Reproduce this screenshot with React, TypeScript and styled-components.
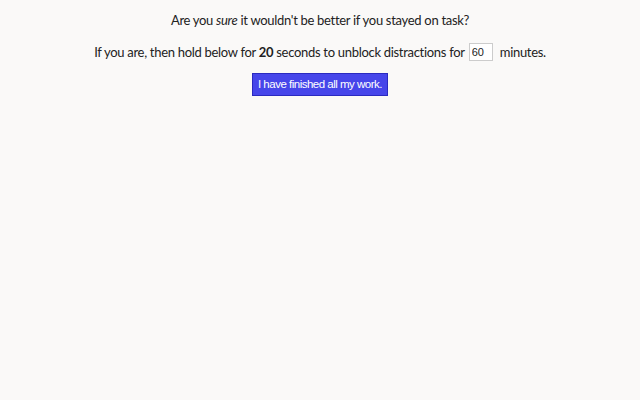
import styled, { createGlobalStyle } from 'styled-components'

const GlobalStyle = createGlobalStyle`
  html, body {
    margin: 0;
    padding: 0;
    background: #faf9f8;
  }
  body {
    font-family: Lato, 'Noto Sans', sans-serif;
    color: #222;
  }
`

const App = () => {
  return (
    <StyledPage>
      <GlobalStyle />
      <StyledQuestion>
        Are you <em>sure</em> it wouldn't be better if you stayed on task?
      </StyledQuestion>
      <StyledQuestion>
        If you are, then hold below for <b>20</b> seconds to unblock distractions for
        <StyledMinutes type="text" defaultValue="60" />
        minutes.
      </StyledQuestion>
      <StyledButton>I have finished all my work.</StyledButton>
    </StyledPage>
  )
}

export default App

const StyledPage = styled.div`
  display: flex;
  flex-direction: column;
  align-items: center;
  padding-top: 11px;
  min-height: 400px;
  box-sizing: border-box;
`
const StyledQuestion = styled.p`
  margin: 0 0 14px;
  font-size: 13px;
  letter-spacing: -0.3px;
  line-height: 18px;
  text-align: center;
  white-space: nowrap;

  em {
    font-style: italic;
  }
  b {
    font-weight: 700;
  }
`
const StyledMinutes = styled.input`
  width: 18px;
  height: 14px;
  padding: 1px 2px;
  margin: -4px 7px 0 4px;
  vertical-align: middle;
  border: 1px solid #ccc;
  background: #fff;
  font-family: 'Liberation Sans', Arial, sans-serif;
  font-size: 11px;
  letter-spacing: 0;
  color: #222;
  outline: none;
`
const StyledButton = styled.button`
  margin-top: -2px;
  padding: 3px 5px;
  background: #4646ea;
  border: 1px solid #2a2ac0;
  color: #fff;
  font-family: 'Liberation Sans', Arial, sans-serif;
  font-size: 11.5px;
  letter-spacing: -0.5px;
  line-height: 15px;
  cursor: pointer;
`
